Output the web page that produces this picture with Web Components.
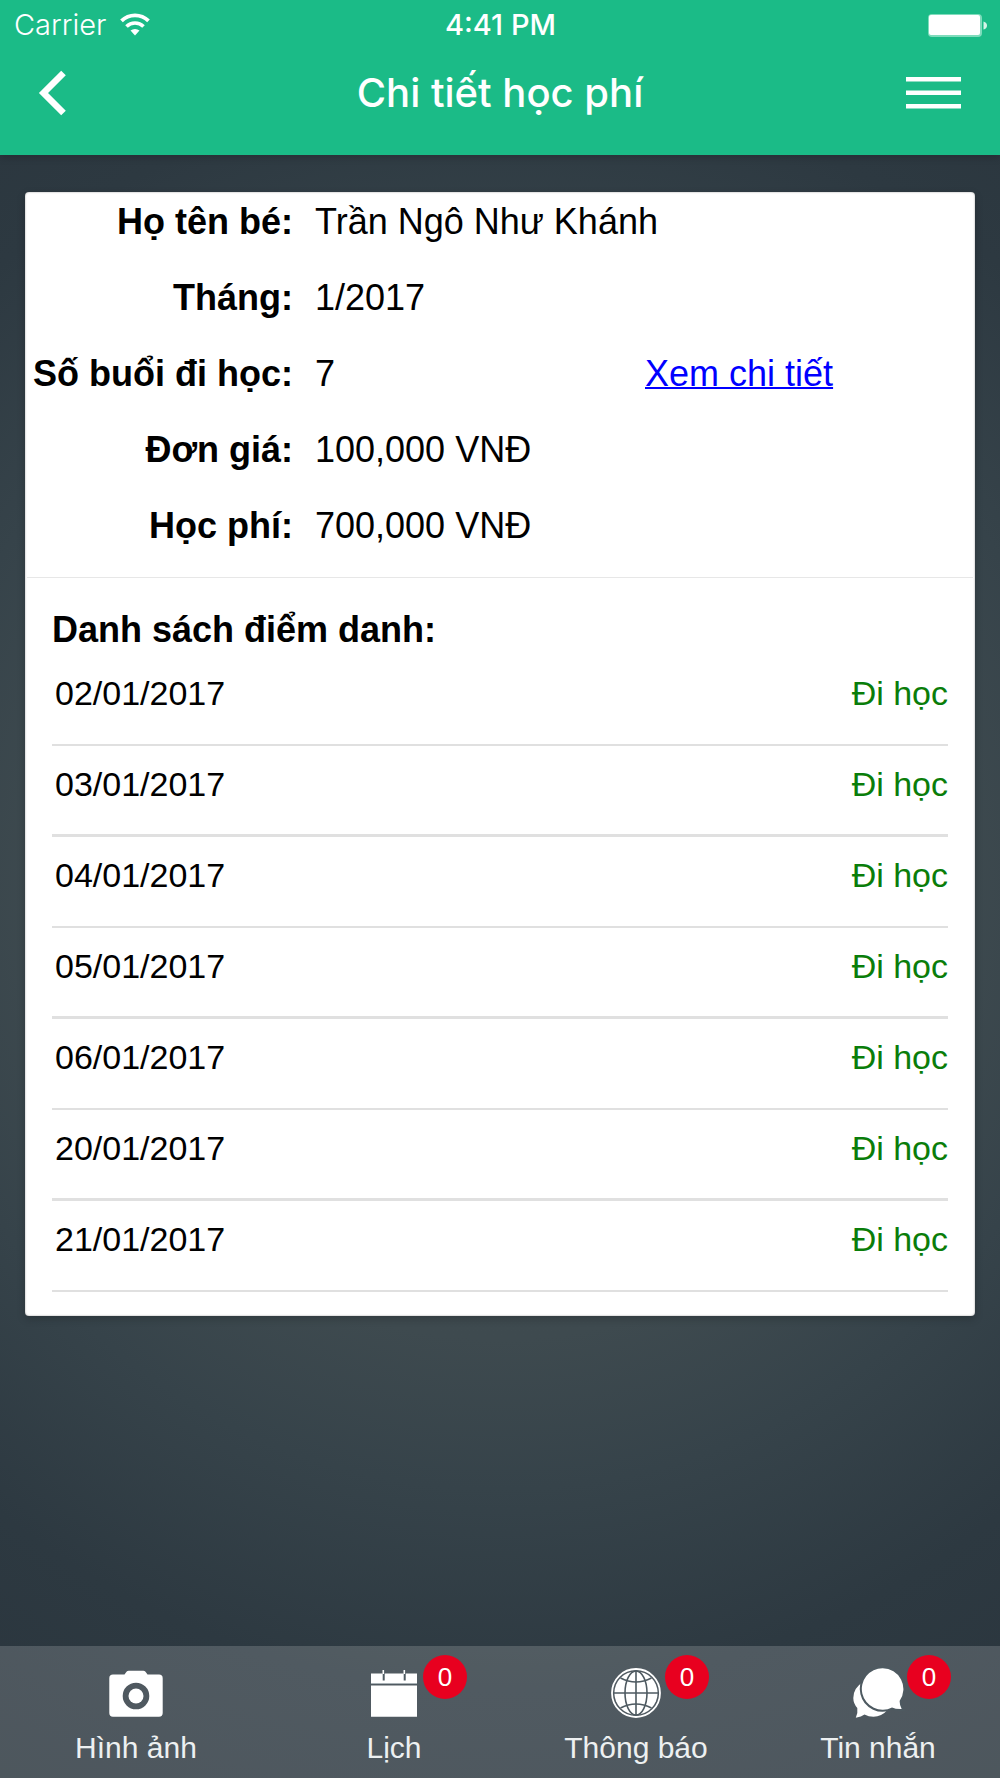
<!DOCTYPE html>
<html lang="vi">
<head>
<meta charset="utf-8">
<meta name="viewport" content="width=device-width, initial-scale=1">
<title>Chi tiết học phí</title>
<style>
    body {
        margin: 0;
        font-family: "Liberation Sans", Arial, sans-serif;
        color: #000;
    }
</style>
</head>
<body>
<app-screen>
    <status-bar slot="header" carrier="Carrier" time="4:41 PM"></status-bar>
    <nav-bar slot="header">Chi tiết học phí</nav-bar>

    <info-card>
        <tuition-info></tuition-info>
        <attendance-list slot="list">Danh sách điểm danh:</attendance-list>
    </info-card>

    <tab-item slot="tabs" icon="camera">Hình ảnh</tab-item>
    <tab-item slot="tabs" icon="calendar" count="0">Lịch</tab-item>
    <tab-item slot="tabs" icon="globe" count="0">Thông báo</tab-item>
    <tab-item slot="tabs" icon="chat" count="0">Tin nhắn</tab-item>
</app-screen>

<script>
// Page frame: header, content, bottom tabs
class AppScreen extends HTMLElement {
    constructor() {
        super();
        this.attachShadow({ mode: 'open' });
    }

    connectedCallback() {
        this.shadowRoot.innerHTML = `
            <style>
                :host {
                    display: flex;
                    flex-direction: column;
                    min-height: 100vh;
                    background: radial-gradient(circle at 50% 50%, #434e52 0, #3e4a4f 450px, #36434a 600px, #2d3941 800px, #2a353d 100%);
                }
                header {
                    padding-bottom: 19px;
                    background: #1bbb87;
                    color: #fff;
                    box-shadow: 0 2px 8px rgba(0, 0, 0, .2);
                }
                main {
                    flex: 1;
                    padding: 37px 25px;
                }
                nav {
                    display: grid;
                    grid-template-columns: 272fr 244fr 240fr 244fr;
                    background: rgba(255, 255, 255, .17);
                }
            </style>
            <header><slot name="header"></slot></header>
            <main><slot></slot></main>
            <nav><slot name="tabs"></slot></nav>
        `;
    }
}

class StatusBar extends HTMLElement {
    constructor() {
        super();
        this.attachShadow({ mode: 'open' });
    }

    connectedCallback() {
        this.shadowRoot.innerHTML = `
            <style>
                :host {
                    display: grid;
                    grid-template-columns: 1fr auto 1fr;
                    align-items: center;
                    height: 50px;
                    padding: 0 13px 0 14px;
                    font: 29px/34px Inter, sans-serif;
                }
                .carrier {
                    display: flex;
                    align-items: center;
                    gap: 14px;
                    font-weight: 300;
                }
                .time {
                    font-weight: 500;
                }
                .battery {
                    justify-self: end;
                }
                svg {
                    display: block;
                }
            </style>
            <div class="carrier">
                <span>${this.getAttribute('carrier')}</span>
                <svg width="30" height="24" viewBox="0 0 30 24" fill="none" stroke="#fff" aria-hidden="true">
                    <path d="M1.5 7.8a19.400 19.400 0 0 1 27 0" stroke-width="3.800"/>
                    <path d="M6.500 13.500a12 12 0 0 1 17 0" stroke-width="3.600"/>
                    <path d="M10.500 17.600a6.800 6.800 0 0 1 9 0L15 22.400z" fill="#fff" stroke="none"/>
                </svg>
            </div>
            <span class="time">${this.getAttribute('time')}</span>
            <svg class="battery" width="60" height="24" viewBox="0 0 60 24" aria-hidden="true">
                <rect x="1" y="1" width="54" height="23" rx="4" fill="#7fdcbc"/>
                <rect x="2" y="2" width="51" height="20" rx="2" fill="#fff"/>
                <path d="M56.500 8.500q3.500 1 3.500 4t-3.500 4z" fill="#d5f4e8"/>
            </svg>
        `;
    }
}

class NavBar extends HTMLElement {
    constructor() {
        super();
        this.attachShadow({ mode: 'open' });
    }

    connectedCallback() {
        this.shadowRoot.innerHTML = `
            <style>
                :host {
                    display: grid;
                    grid-template-columns: 1fr auto 1fr;
                    align-items: center;
                    height: 86px;
                    padding: 0 38px;
                }
                h1 {
                    margin: 0;
                    font: 500 40px/50px Inter, sans-serif;
                }
                button {
                    padding: 0;
                    border: 0;
                    background: none;
                    cursor: pointer;
                }
                .menu {
                    justify-self: end;
                }
                .back {
                    justify-self: start;
                }
                svg {
                    display: block;
                }
            </style>
            <button class="back" aria-label="Quay lại">
                <svg width="30" height="46" viewBox="0 0 30 46" fill="none" stroke="#fff" stroke-width="6.500">
                    <path d="M25.500 3 5.500 23l20 20" stroke-linejoin="miter"/>
                </svg>
            </button>
            <h1><slot></slot></h1>
            <button class="menu" aria-label="Menu">
                <svg width="56" height="36" viewBox="0 0 56 36" fill="#fff">
                    <path d="M0 2h55v4.500H0zM0 15.500h55V20H0zM0 29h55v4.500H0z"/>
                </svg>
            </button>
        `;
    }
}

class InfoCard extends HTMLElement {
    constructor() {
        super();
        this.attachShadow({ mode: 'open' });
    }

    connectedCallback() {
        this.shadowRoot.innerHTML = `
            <style>
                :host {
                    display: block;
                    box-sizing: border-box;
                    border-radius: 4px;
                    background: #fff;
                    box-shadow: inset 0 0 2px rgba(0, 0, 0, .4), 0 3px 8px rgba(0, 0, 0, .2);
                }
                hr {
                    height: 1px;
                    margin: 0 2px;
                    border: 0;
                    background: #e7e7e7;
                }
            </style>
            <slot></slot>
            <hr>
            <slot name="list"></slot>
        `;
    }
}

class TuitionInfo extends HTMLElement {
    constructor() {
        super();
        this.attachShadow({ mode: 'open' });
        this.rows = [
            { label: 'Họ tên bé:', value: 'Trần Ngô Như Khánh' },
            { label: 'Tháng:', value: '1/2017' },
            { label: 'Số buổi đi học:', value: '7', link: 'Xem chi tiết' },
            { label: 'Đơn giá:', value: '100,000 VNĐ' },
            { label: 'Học phí:', value: '700,000 VNĐ' }
        ];
    }

    connectedCallback() {
        const rows = this.rows.map(r => `
            <div class="row">
                <dt>${r.label}</dt>
                <dd>${r.value}</dd>
                ${r.link ? `<dd><a href="#">${r.link}</a></dd>` : ''}
            </div>`).join('');

        this.shadowRoot.innerHTML = `
            <style>
                :host {
                    display: block;
                    padding: 9px 0 30px;
                    font-size: 36px;
                    line-height: 42px;
                }
                dl {
                    display: flex;
                    flex-direction: column;
                    gap: 34px;
                    margin: 0;
                }
                .row {
                    display: grid;
                    grid-template-columns: 290px 1fr 1fr;
                }
                dt {
                    padding-right: 22px;
                    font-weight: bold;
                    text-align: right;
                    white-space: nowrap;
                }
                dd {
                    margin: 0;
                    white-space: nowrap;
                }
                a {
                    color: #00f;
                    text-decoration-thickness: 2px;
                    text-decoration-skip-ink: none;
                }
            </style>
            <dl>${rows}</dl>
        `;
    }
}

class AttendanceList extends HTMLElement {
    constructor() {
        super();
        this.attachShadow({ mode: 'open' });
        this.days = [
            '02/01/2017', '03/01/2017', '04/01/2017', '05/01/2017',
            '06/01/2017', '20/01/2017', '21/01/2017'
        ];
    }

    connectedCallback() {
        const rows = this.days.map(day => `<tr><td>${day}</td><td class="status">Đi học</td></tr>`).join('');

        this.shadowRoot.innerHTML = `
            <style>
                :host {
                    display: block;
                    padding: 31px 27px 24px;
                }
                h2 {
                    margin: 0 0 4px;
                    font-size: 36px;
                    line-height: 42px;
                }
                table {
                    width: 100%;
                    border-spacing: 0;
                    font-size: 34px;
                    line-height: 40px;
                }
                td {
                    box-sizing: border-box;
                    height: 91px;
                    padding: 18px 0 0 3px;
                    border-bottom: 2px solid #e0e0e0;
                    vertical-align: top;
                }
                tr:nth-child(even) td {
                    border-bottom-width: 3px;
                }
                .status {
                    color: #0a7d0a;
                    text-align: right;
                }
            </style>
            <h2 id="title"><slot></slot></h2>
            <table aria-labelledby="title"><tbody>${rows}</tbody></table>
        `;
    }
}

const ICONS = {
    camera: `
        <path fill="#fff" fill-rule="evenodd" d="M5 9.500h11.500l2-2.800q.8-1 2.200-1h14.600q1.400 0 2.200 1l2 2.800H51q3.700 0 3.700 3.700v34.800q0 3.700-3.700 3.700H5q-3.700 0-3.700-3.700V13.200q0-3.700 3.700-3.700zM28 17.700a13.300 13.300 0 1 0 0 26.600 13.300 13.300 0 1 0 0-26.600z"/>
        <circle cx="28" cy="31" r="7.500" fill="#fff"/>`,
    calendar: `
        <path fill="#fff" d="M5 8.500h46V18H5zM5 20.500h46v31.200H5z"/>
        <path fill="#a9b2b6" d="M5 18h46v1H5z"/>
        <path stroke="#4e5a61" stroke-width="2" d="M17.700 8v7.500M38.700 8v7.500"/>
        <path stroke="#fff" stroke-width="1.600" d="M17.300 5v4M38.300 5v4"/>`,
    globe: `
        <circle cx="28" cy="28" r="24" fill="none" stroke="#fff" stroke-width="1.800"/>
        <circle cx="28" cy="28" r="21.600" fill="#fff"/>
        <g fill="none" stroke="#4e5a61" stroke-width="1.600">
            <path d="M28 6v44M6 28h44"/>
            <ellipse cx="28" cy="28" rx="11" ry="22"/>
            <path d="M12.500 13Q28 21 43.500 13M12.500 43Q28 35 43.500 43"/>
        </g>`,
    chat: `
        <path fill="#fff" d="M13 17Q3.300 23 3.300 33q0 5.500 4 10 .8 4.500-1.500 9.700 5.700-.8 8.700-3.200 4 2.200 9 2.200 8 0 14-6.700z"/>
        <path fill="#fff" stroke="#4e5a61" stroke-width="4" paint-order="stroke" d="M32.700 3.300a20.700 20.700 0 0 1 17 32.500q-.3 4.200 2 8.200-6 .2-9.700-1.600a20.700 20.700 0 1 1-9.300-39.100z"/>`
};

class TabItem extends HTMLElement {
    constructor() {
        super();
        this.attachShadow({ mode: 'open' });
    }

    connectedCallback() {
        const count = this.getAttribute('count');
        this.shadowRoot.innerHTML = `
            <style>
                :host {
                    display: block;
                }
                a {
                    display: flex;
                    flex-direction: column;
                    align-items: center;
                    gap: 9px;
                    padding: 19px 0 12px;
                    color: #edf0f1;
                    font-size: 30px;
                    line-height: 36px;
                    text-decoration: none;
                    white-space: nowrap;
                }
                .icon {
                    position: relative;
                }
                svg {
                    display: block;
                }
                /* Counter sits over the icon's top right corner */
                .badge {
                    position: absolute;
                    top: -10px;
                    left: 57px;
                    width: 44px;
                    height: 44px;
                    border-radius: 50%;
                    background: #e8001f;
                    color: #fff;
                    font-size: 26px;
                    line-height: 44px;
                    text-align: center;
                }
            </style>
            <a href="#">
                <span class="icon">
                    <svg width="56" height="56" viewBox="0 0 56 56" aria-hidden="true">${ICONS[this.getAttribute('icon')]}</svg>
                    ${count !== null ? `<span class="badge">${count}</span>` : ''}
                </span>
                <span><slot></slot></span>
            </a>
        `;
    }
}

customElements.define('app-screen', AppScreen);
customElements.define('status-bar', StatusBar);
customElements.define('nav-bar', NavBar);
customElements.define('info-card', InfoCard);
customElements.define('tuition-info', TuitionInfo);
customElements.define('attendance-list', AttendanceList);
customElements.define('tab-item', TabItem);
</script>
</body>
</html>
